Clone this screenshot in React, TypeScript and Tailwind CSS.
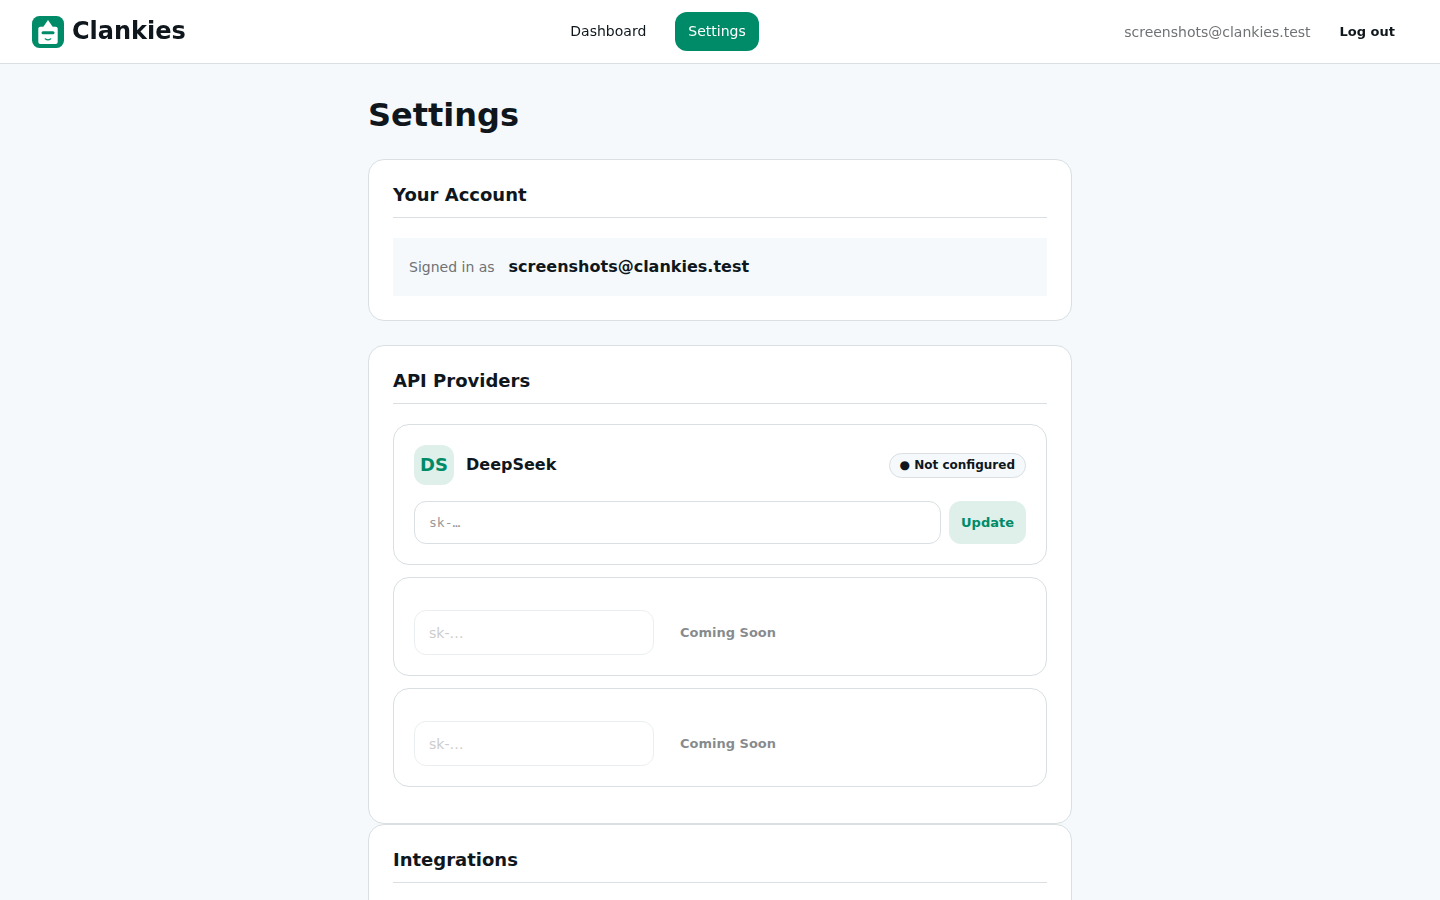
import type { ReactNode } from 'react';

function Logo() {
  return (
    <svg viewBox="0 0 32 32" className="size-8" aria-hidden="true">
      <rect width="32" height="32" rx="7.5" fill="#008b68" />
      <path d="M16 4 L20.8 11 H11.2 Z" fill="#fff" />
      <rect x="6.3" y="10.7" width="19.4" height="17.3" rx="2" fill="#fff" />
      <rect x="9.5" y="15.3" width="13" height="3" rx="1.5" fill="#008b68" />
      <path d="M13.2 22.8 Q16 25 18.8 22.8" fill="none" stroke="#008b68" strokeWidth="1.2" strokeLinecap="round" />
    </svg>
  );
}

function Header() {
  return (
    <header className="sticky top-0 z-10 flex h-16 items-center justify-between border-b border-[#d9dfe2] bg-white/95 px-8 backdrop-blur-sm">
      <a href="#" className="flex items-center gap-2 text-2xl font-bold">
        <Logo />
        <span className="-mt-0.5">Clankies</span>
      </a>
      <nav className="ml-1.5 flex gap-4 text-sm leading-[23px]">
        <a href="#dashboard" className="rounded-xl px-[13px] py-2">Dashboard</a>
        <a href="#settings" aria-current="page" className="rounded-xl bg-[#008b68] px-[13px] py-2 text-white">Settings</a>
      </nav>
      <div className="flex items-center gap-4">
        <span className="text-sm text-[#6f7275]">screenshots@clankies.test</span>
        <button type="button" className="px-[13px] py-2 text-[13px] font-bold">Log out</button>
      </div>
    </header>
  );
}

function Card({ title, className = '', children }: { title: string; className?: string; children?: ReactNode }) {
  return (
    <section className={`rounded-2xl border border-[#d9dfe2] bg-white p-6 ${className}`}>
      <h2 className="mb-5 border-b border-[#d9dfe2] pb-3 text-lg leading-[21px] font-bold">{title}</h2>
      {children}
    </section>
  );
}

function ComingSoonProvider() {
  return (
    <div className="flex items-center rounded-2xl border border-[#d9dfe2] px-5 pt-8 pb-5">
      <input
        type="password"
        disabled
        aria-label="API key"
        placeholder="sk-…"
        className="h-[45px] w-60 rounded-xl border border-[#d9dfe2] bg-white px-3.5 text-sm opacity-50 placeholder:text-[#999]"
      />
      <button type="button" disabled className="ml-3 px-3.5 text-[13px] font-bold opacity-50">Coming Soon</button>
    </div>
  );
}

export default function App() {
  return (
    <div className="min-h-screen bg-[#f5f9fc] font-['DejaVu_Sans',sans-serif] text-[#0f171c]">
      <Header />
      <main className="mx-auto max-w-[768px] px-8 py-8">
        <h1 className="mb-6 text-[32px] leading-[39px] font-bold">Settings</h1>
        <Card title="Your Account" className="mb-6">
          <div className="flex items-center gap-3.5 bg-[#f5f9fc] px-4 py-4 leading-[26px]">
            <span className="text-sm leading-[26px] text-[#6f7275]">Signed in as</span>
            <strong>screenshots@clankies.test</strong>
          </div>
        </Card>
        <Card title="API Providers">
          <div className="mb-3 flex flex-col gap-3">
            <div className="rounded-2xl border border-[#d9dfe2] p-5">
              <div className="mb-4 flex items-center gap-3">
                <span className="flex size-10 items-center justify-center rounded-xl bg-[#dff0eb] text-lg font-bold text-[#008b68]">DS</span>
                <h3 className="font-bold">DeepSeek</h3>
                <span className="ml-auto rounded-full border border-[#d9dfe2] bg-[#f5f9fc] px-2.5 text-xs leading-[23px] font-bold">● Not configured</span>
              </div>
              <form className="flex gap-2" onSubmit={(e) => e.preventDefault()}>
                <input
                  type="password"
                  aria-label="DeepSeek API key"
                  placeholder="sk-…"
                  className="h-[43px] min-w-0 flex-1 rounded-xl border border-[#d9dfe2] bg-white px-3.5 font-['DejaVu_Sans_Mono',monospace] text-[13px] placeholder:text-[#999]"
                />
                <button type="submit" className="rounded-xl bg-[#dff0eb] px-3 text-[13px] font-bold text-[#008b68]">Update</button>
              </form>
            </div>
            <ComingSoonProvider />
            <ComingSoonProvider />
          </div>
        </Card>
        <Card title="Integrations" className="min-h-40" />
      </main>
    </div>
  );
}
